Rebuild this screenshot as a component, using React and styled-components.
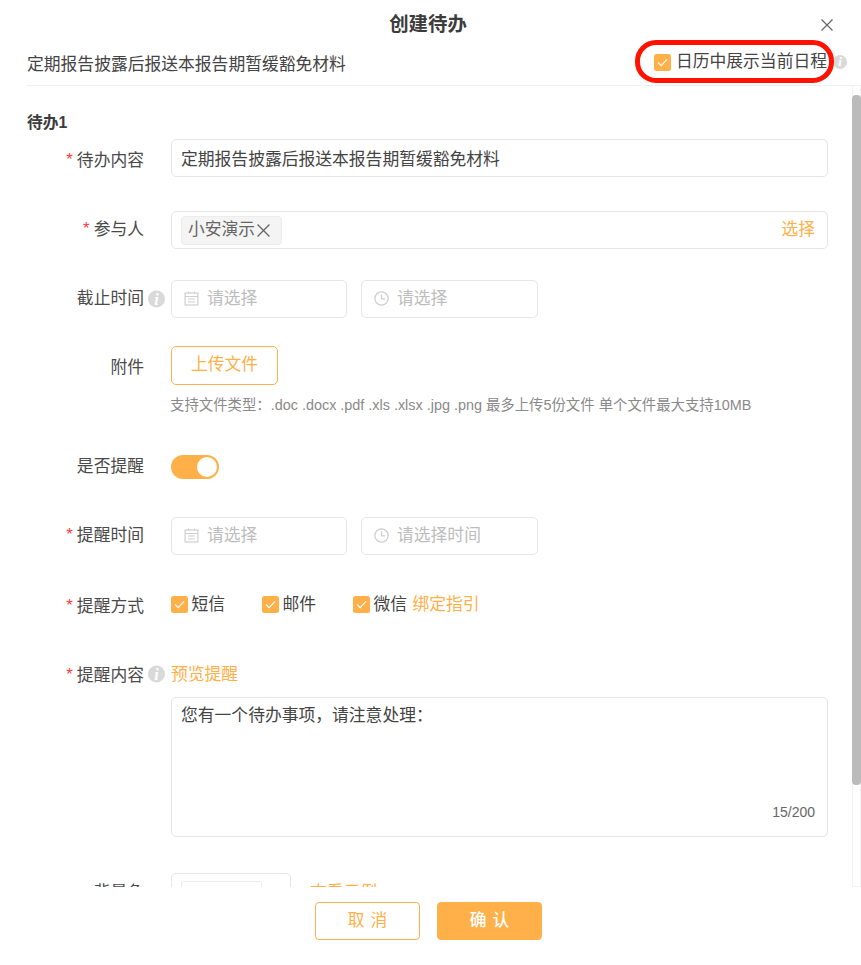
import React from "react";
import styled, { createGlobalStyle } from "styled-components";

const Global = createGlobalStyle`
  html, body { margin: 0; padding: 0; background: #fff; }
  body { overflow: hidden; font-family: "Liberation Sans", "Noto Sans CJK SC", sans-serif; }
  * { box-sizing: border-box; }
`;

const ORANGE = "#ffb049";
const BORDER = "#e6e6e6";

const Modal = styled.div`
  position: relative;
  width: 861px;
  height: 965px;
  display: flex;
  flex-direction: column;
  background: #fff;
  color: #444;
  font-size: 16.8px;
  line-height: 24px;
  overflow: hidden;
`;
const Title = styled.h1`
  margin: 0;
  height: 48px;
  line-height: 49px;
  text-align: center;
  font-size: 19.4px;
  font-weight: 700;
  color: #3c3c3c;
  padding-right: 5px;
`;
const Close = styled.button`
  position: absolute;
  top: 19px;
  right: 28px;
  width: 12px;
  height: 12px;
  padding: 0;
  border: 0;
  background: none;
  color: #666;
  display: flex;
`;
const SubRow = styled.div`
  height: 38px;
  margin-left: 27px;
  padding: 0 14px 4px 0;
  border-bottom: 1px solid #efefef;
  display: flex;
  align-items: center;
  justify-content: space-between;
  flex: none;
`;
const SubRight = styled.div`
  position: relative;
  display: flex;
  align-items: center;
  margin-top: -5px;
`;
const Mark = styled.span`
  position: absolute;
  left: -19px;
  top: -10.5px;
  width: 199px;
  height: 43px;
  border: 5px solid #ff1200;
  border-radius: 21px;
`;
const Body = styled.div`
  flex: 1;
  min-height: 0;
  display: flex;
`;
const Form = styled.div`
  flex: 1;
  min-width: 0;
  overflow: hidden;
  padding: 25px 24px 0 27px;
`;
const Section = styled.div`
  font-weight: 700;
  font-size: 15.75px;
  line-height: 24px;
  color: #3c3c3c;
  height: 28px;
`;
const Row = styled.div`
  display: flex;
  align-items: ${(p) => p.$align || "center"};
  margin-top: ${(p) => p.$top || 0}px;
  height: ${(p) => (p.$h ? `${p.$h}px` : "auto")};
`;
const Label = styled.div`
  position: relative;
  width: 117px;
  flex: none;
  text-align: right;
  color: #4a4a4a;
  padding-top: ${(p) => p.$down || 0}px;
  padding-bottom: ${(p) => p.$lift || 0}px;
`;
const Star = styled.span`
  color: #ff3b3b;
  margin-right: 4px;
  vertical-align: 1px;
`;
const LabelHint = styled.span`
  position: absolute;
  left: 121px;
  top: 50%;
  transform: translateY(-50%);
  display: flex;
`;
const Field = styled.div`
  margin-left: 27px;
  flex: 1;
  min-width: 0;
  display: flex;
  align-items: center;
`;
const Input = styled.div`
  flex: 1;
  height: 38px;
  border: 1px solid ${BORDER};
  border-radius: 5px;
  display: flex;
  align-items: center;
  padding: 0 12px 0 9px;
  color: #444;
`;
const InputText = styled.span`
  padding-top: 4px;
`;
const Tag = styled.span`
  height: 29px;
  width: 101px;
  display: flex;
  align-items: center;
  padding-left: 6px;
  gap: 2px;
  background: #f4f4f4;
  border: 1px solid #ececec;
  border-radius: 4px;
  color: #666;
`;
const Link = styled.span`
  color: ${ORANGE};
  margin-left: ${(p) => p.$left || 0}px;
  padding-top: ${(p) => p.$down || 0}px;
`;
const Spacer = styled.span`
  flex: 1;
`;
const Picker = styled.div`
  width: ${(p) => p.$w}px;
  height: 38px;
  margin-right: ${(p) => p.$gap || 0}px;
  border: 1px solid ${BORDER};
  border-radius: 5px;
  display: flex;
  align-items: center;
  gap: 8px;
  padding-left: 12px;
  color: #bdbdbd;
  svg { flex: none; margin-bottom: 2px; }
`;
const Upload = styled.button`
  width: 107px;
  height: 39px;
  border: 1px solid ${ORANGE};
  border-radius: 5px;
  background: #fff;
  color: ${ORANGE};
  font: inherit;
  line-height: 24px;
  padding: 0 0 2px;
`;
const Hint = styled.div`
  margin: 10px 0 0 143px;
  font-size: 14.4px;
  line-height: 20px;
  color: #8a8a8a;
  white-space: nowrap;
`;
const Switch = styled.span`
  width: 48px;
  height: 24px;
  border-radius: 12px;
  background: ${ORANGE};
  padding: 2px 2px 2px 26px;
  display: flex;
`;
const Knob = styled.span`
  width: 20px;
  height: 20px;
  border-radius: 50%;
  background: #fff;
`;
const Box = styled.span`
  width: 17px;
  height: 17px;
  flex: none;
  border-radius: 2.5px;
  background: ${ORANGE};
  display: flex;
  align-items: center;
  justify-content: center;
`;
const Check = styled.label`
  display: flex;
  align-items: center;
  gap: ${(p) => p.$gap || 3.5}px;
  margin-right: ${(p) => p.$right || 0}px;
  white-space: nowrap;
`;
const Textarea = styled.div`
  position: relative;
  margin: 11px 0 0 144px;
  height: 140px;
  border: 1px solid ${BORDER};
  border-radius: 5px;
  padding: 6px 9px;
`;
const Counter = styled.span`
  position: absolute;
  right: 12px;
  bottom: 14px;
  font-size: 14px;
  line-height: 20px;
  color: #666;
`;
const SmallField = styled.div`
  width: 120px;
  height: 38px;
  flex: none;
  border: 1px solid ${BORDER};
  border-radius: 5px;
  padding: 7px 0 0 9px;
`;
const SmallInner = styled.div`
  width: 81px;
  height: 24px;
  border: 1px solid #ececec;
  border-radius: 2px;
`;
const Scrollbar = styled.div`
  width: 9px;
  flex: none;
  border-left: 1px solid #f3f3f3;
  border-right: 1px solid #f3f3f3;
  border-bottom: 1px solid #f3f3f3;
  position: relative;
`;
const Thumb = styled.div`
  position: absolute;
  left: -1px;
  top: 9px;
  width: 9px;
  height: 690px;
  border-radius: 4px;
  background: #bbb;
`;
const Footer = styled.div`
  height: 78px;
  flex: none;
  padding: 15px 0 0 315px;
  display: flex;
  gap: 17px;
`;
const Btn = styled.button`
  width: 105px;
  height: 38px;
  border-radius: 4px;
  border: 1px solid ${ORANGE};
  background: ${(p) => (p.$primary ? ORANGE : "#fff")};
  color: ${(p) => (p.$primary ? "#fff" : ORANGE)};
  font: inherit;
  line-height: 24px;
  font-weight: ${(p) => (p.$primary ? 500 : 400)};
  letter-spacing: 6px;
  padding: 0 0 0 6px;
`;
const InfoI = styled.span`
  width: ${(p) => p.$size || 17}px;
  height: ${(p) => p.$size || 17}px;
  margin-left: ${(p) => p.$left || 0}px;
  border-radius: 50%;
  background: #d9d9d9;
  color: #fff;
  font: italic 700 ${(p) => (p.$size ? 13 : 16)}px/${(p) => p.$size || 17}px "Liberation Serif", serif;
  text-align: center;
  display: block;
`;

const Tick = () => (
  <svg width="11" height="9" viewBox="0 0 11 9" fill="none" stroke="#fff" strokeWidth="1.1">
    <path d="M1 4.5 4.2 7.6 10 1.4" />
  </svg>
);
const CheckBox = () => (
  <Box>
    <Tick />
  </Box>
);
const Calendar = () => (
  <svg width="15" height="15" viewBox="0 0 15 15" fill="none" stroke="#cfcfcf" strokeWidth="1.2">
    <rect x="1.1" y="2" width="12.8" height="12" />
    <path d="M1 5.5h13M4 8h7M4 11h7M4.5 .5v2M10.5 .5v2" />
  </svg>
);
const Clock = () => (
  <svg width="15" height="15" viewBox="0 0 15 15" fill="none" stroke="#cfcfcf" strokeWidth="1.3">
    <circle cx="7.5" cy="7.5" r="6.6" />
    <path d="M7.5 3.6v4.2h3.8" />
  </svg>
);
const X = ({ size = 12, color = "currentColor", w = 1.2 }) => (
  <svg width={size} height={size} viewBox="0 0 12 12" fill="none" stroke={color} strokeWidth={w}>
    <path d="M.5 .5l11 11M11.5 .5l-11 11" />
  </svg>
);

const PickerPair = ({ second }) => (
  <Field>
    <Picker $w={176} $gap={14}>
      <Calendar />
      <span>请选择</span>
    </Picker>
    <Picker $w={177}>
      <Clock />
      <span>{second}</span>
    </Picker>
  </Field>
);

export default function App() {
  return (
    <>
      <Global />
      <Modal>
        <Title>创建待办</Title>
        <Close aria-label="关闭">
          <X />
        </Close>
        <SubRow>
          <span>定期报告披露后报送本报告期暂缓豁免材料</span>
          <SubRight>
            <Mark />
            <Check $gap={5}>
              <CheckBox />
              日历中展示当前日程
            </Check>
            <InfoI $size={14} $left={6}>i</InfoI>
          </SubRight>
        </SubRow>
        <Body>
          <Form>
            <Section>待办1</Section>
            <Row>
              <Label $down={4}><Star>*</Star>待办内容</Label>
              <Field><Input><InputText>定期报告披露后报送本报告期暂缓豁免材料</InputText></Input></Field>
            </Row>
            <Row $top={34}>
              <Label $lift={2}><Star>*</Star>参与人</Label>
              <Field>
                <Input>
                  <Tag>小安演示<X size={13} color="#666" /></Tag>
                  <Spacer />
                  <Link>选择</Link>
                </Input>
              </Field>
            </Row>
            <Row $top={31}>
              <Label>
                截止时间
                <LabelHint><InfoI>i</InfoI></LabelHint>
              </Label>
              <PickerPair second="请选择" />
            </Row>
            <Row $top={28}>
              <Label $down={4}>附件</Label>
              <Field><Upload>上传文件</Upload></Field>
            </Row>
            <Hint>支持文件类型：.doc .docx .pdf .xls .xlsx .jpg .png 最多上传5份文件 单个文件最大支持10MB</Hint>
            <Row $top={40} $h={24}>
              <Label>是否提醒</Label>
              <Field><Switch><Knob /></Switch></Field>
            </Row>
            <Row $top={38}>
              <Label $lift={2}><Star>*</Star>提醒时间</Label>
              <PickerPair second="请选择时间" />
            </Row>
            <Row $top={38} $h={23}>
              <Label $down={3}><Star>*</Star>提醒方式</Label>
              <Field>
                <Check $right={36.9}><CheckBox />短信</Check>
                <Check $right={36.9}><CheckBox />邮件</Check>
                <Check><CheckBox />微信<Link $left={2}>绑定指引</Link></Check>
              </Field>
            </Row>
            <Row $top={46} $h={24}>
              <Label $down={2}>
                <Star>*</Star>提醒内容
                <LabelHint><InfoI>i</InfoI></LabelHint>
              </Label>
              <Field><Link $down={2}>预览提醒</Link></Field>
            </Row>
            <Textarea>
              您有一个待办事项，请注意处理：
              <Counter>15/200</Counter>
            </Textarea>
            <Row $top={36} $align="flex-start">
              <Label $down={8}>背景色</Label>
              <Field>
                <SmallField><SmallInner /></SmallField>
                <Link $left={19} $down={2}>查看示例</Link>
              </Field>
            </Row>
          </Form>
          <Scrollbar><Thumb /></Scrollbar>
        </Body>
        <Footer>
          <Btn>取消</Btn>
          <Btn $primary>确认</Btn>
        </Footer>
      </Modal>
    </>
  );
}
